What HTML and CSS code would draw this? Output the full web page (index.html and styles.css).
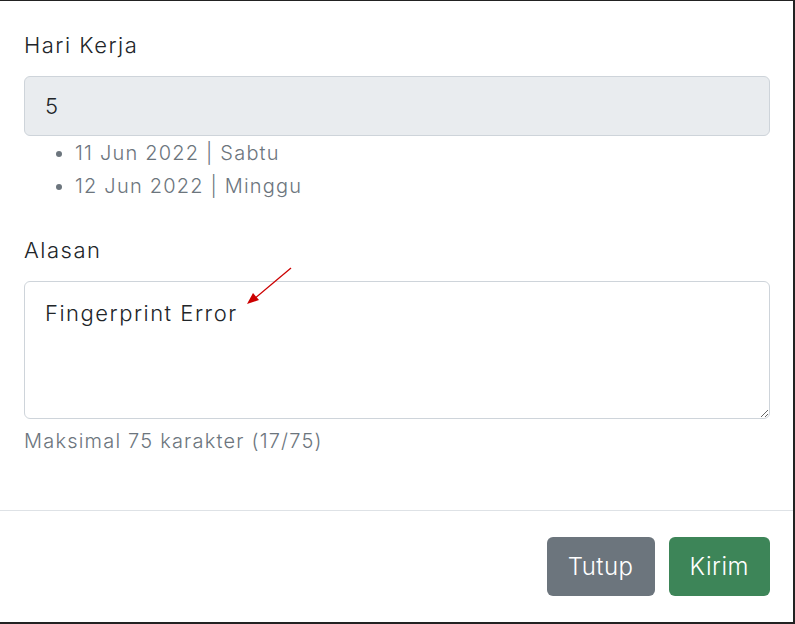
FILE: index.html
```html
<!DOCTYPE html>
<html lang="id">
<head>
<meta charset="utf-8">
<title>Form Cuti</title>
<link rel="stylesheet" href="styles.css">
</head>
<body>
<div class="modal">
  <div class="modal-body">
    <label class="form-label">Hari Kerja</label>
    <div class="form-control readonly">5</div>
    <ul class="dates">
      <li>11 Jun 2022 | Sabtu</li>
      <li>12 Jun 2022 | Minggu</li>
    </ul>
    <label class="form-label second">Alasan</label>
    <textarea class="form-control area">Fingerprint Error</textarea>
    <div class="help">Maksimal 75 karakter (17/75)</div>
  </div>
  <div class="modal-footer">
    <button class="btn btn-secondary">Tutup</button>
    <button class="btn btn-success">Kirim</button>
  </div>
  <svg class="arrow" width="60" height="50" viewBox="0 0 60 50">
    <line x1="51" y1="8" x2="14" y2="39" stroke="#cc0000" stroke-width="1.3"/>
    <polygon points="7,44 13,33 19,40" fill="#cc0000"/>
  </svg>
</div>
</body>
</html>
```
FILE: styles.css
```css
html, body {
  margin: 0;
  padding: 0;
}
body {
  background: #222222;
  height: 624px;
  overflow: hidden;
  font-family: "Inter", "Liberation Sans", sans-serif;
  font-weight: 300;
  letter-spacing: 1px;
}
.modal {
  position: relative;
  margin-top: 1px;
  width: 793px;
  height: 621px;
  background: #ffffff;
  display: flex;
  flex-direction: column;
}
.modal-body {
  padding: 28px 23px 0 24px;
  display: flex;
  flex-direction: column;
  height: 509px;
  box-sizing: border-box;
}
.form-label {
  font-size: 22px;
  line-height: 33px;
  letter-spacing: 1.5px;
  color: #212529;
  margin-bottom: 14px;
}
.form-label.second {
  margin-top: 31px;
}
.form-control {
  box-sizing: border-box;
  border: 1px solid #ced4da;
  border-radius: 6px;
  font-family: inherit;
  font-weight: inherit;
  letter-spacing: 1.5px;
  font-size: 22px;
  color: #212529;
  width: 100%;
}
.readonly {
  height: 60px;
  background: #e9ecef;
  padding-left: 20px;
  display: flex;
  align-items: center;
}
.dates {
  margin: 1px 0 0 0;
  padding-left: 51px;
  color: #6c757d;
  font-size: 20px;
  letter-spacing: 1.2px;
  line-height: 33px;
}
.area {
  display: block;
  height: 138px;
  padding: 15px 20px;
  line-height: 33px;
  background: #ffffff;
  resize: vertical;
  outline: none;
}
.help {
  margin-top: 7px;
  font-size: 20px;
  letter-spacing: 1.2px;
  line-height: 30px;
  color: #6c757d;
}
.modal-footer {
  border-top: 1px solid #dee2e6;
  padding: 26px 23px 0 24px;
  display: flex;
  justify-content: flex-end;
  gap: 14px;
}
.btn {
  height: 59px;
  padding: 0 21px;
  border: none;
  border-radius: 6px;
  font-family: inherit;
  font-weight: inherit;
  letter-spacing: 0.5px;
  font-size: 24px;
  color: #ffffff;
}
.btn-secondary {
  background: #6c757d;
}
.btn-success {
  background: #3d8558;
}
.arrow {
  position: absolute;
  left: 240px;
  top: 259px;
}
```
